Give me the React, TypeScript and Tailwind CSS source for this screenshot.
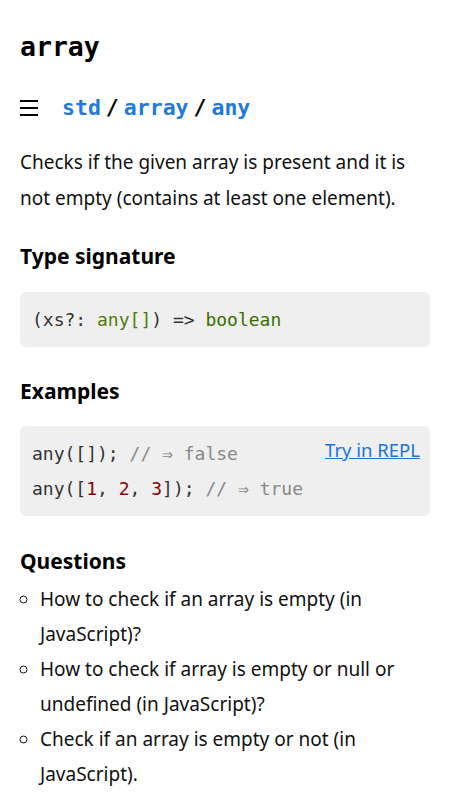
const sans = "font-['Noto_Sans','Open_Sans',sans-serif]";
const mono = "font-['DejaVu_Sans_Mono','Liberation_Mono',monospace]";

const questions = [
  'How to check if an array is empty (in JavaScript)?',
  'How to check if array is empty or null or undefined (in JavaScript)?',
  'Check if an array is empty or not (in JavaScript).',
];

export default function App() {
  return (
    <div className={`${sans} min-h-screen bg-white px-5 text-black`}>
      <h1 className={`${mono} pt-[27px] text-[26.5px] font-bold leading-[40px]`}>array</h1>

      <nav className="mt-[26px] flex items-center">
        <span className="flex h-[20px] w-[20px] flex-col justify-center gap-[5px]">
          <span className="block h-[2px] w-[18px] bg-black" />
          <span className="block h-[2px] w-[18px] bg-black" />
          <span className="block h-[2px] w-[18px] bg-black" />
        </span>
        <div className={`${mono} ml-[22px] text-[21.5px] font-bold leading-[30px]`}>
          <a className="text-[#1f7ad8]">std</a>
          <span className="mx-[5px]">/</span>
          <a className="text-[#1f7ad8]">array</a>
          <span className="mx-[5px]">/</span>
          <a className="text-[#1f7ad8]">any</a>
        </div>
      </nav>

      <p className="mt-[21px] text-[19px] leading-[36px] text-[#111]">
        Checks if the given array is present and it is not empty (contains at least one element).
      </p>

      <h2 className="mt-[25px] text-[21px] font-bold leading-[30px]">Type signature</h2>
      <pre className={`${mono} mt-[21px] rounded-md bg-[#efefef] px-[12px] py-[12px] text-[18px] leading-[31px] text-[#333]`}>
        (xs?: <span className="text-[#4f7a0a]">any[]</span>) =&gt; <span className="text-[#3b6e00]">boolean</span>
      </pre>

      <h2 className="mt-[29px] text-[21px] font-bold leading-[30px]">Examples</h2>
      <div className="relative mt-[20px] rounded-md bg-[#efefef] px-[12px] py-[10px]">
        <a className="absolute right-[10px] top-[10px] text-[18.5px] leading-[28px] text-[#1a73d9] underline">
          Try in REPL
        </a>
        <pre className={`${mono} text-[18px] leading-[35px] text-[#333]`}>
          <div>
            any([]); <span className="text-[#888]">// ⇒ false</span>
          </div>
          <div>
            any([<span className="text-[#8b0000]">1</span>, <span className="text-[#8b0000]">2</span>,{' '}
            <span className="text-[#8b0000]">3</span>]); <span className="text-[#888]">// ⇒ true</span>
          </div>
        </pre>
      </div>

      <h2 className="mt-[30px] text-[21px] font-bold leading-[30px]">Questions</h2>
      <ul className="mt-[6px] list-[circle] pl-[20px] text-[19px] leading-[35px] text-[#111]">
        {questions.map((q) => (
          <li key={q}>{q}</li>
        ))}
      </ul>
    </div>
  );
}
